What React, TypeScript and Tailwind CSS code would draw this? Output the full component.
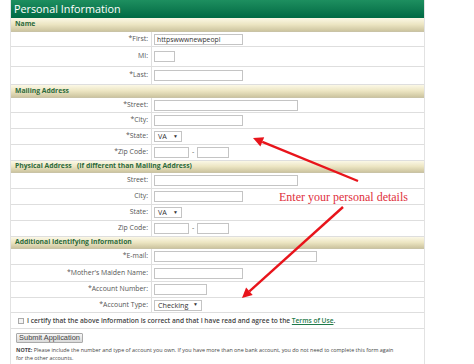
import React from 'react';

interface RowProps {
  label: string;
  h?: string;
  children?: React.ReactNode;
}

// one label / field line of the form table
const Row: React.FC<RowProps> = ({ label, h = 'h-[16px]', children }) => (
  <div className={`flex ${h} border-b border-[#dedede]`}>
    <div className="w-[141px] shrink-0 border-r border-[#dedede] flex items-center justify-end pr-[3px] text-[6.9px] text-[#555]">
      {label}
    </div>
    <div className="flex items-center pl-[2px] gap-[3px]">{children}</div>
  </div>
);

const Section: React.FC<{ title: string; h?: string }> = ({ title, h = 'h-[13px]' }) => (
  <div
    className={`${h} flex items-center pl-[4px] text-[6.8px] font-bold text-[#2c6a3a] whitespace-pre bg-linear-to-b from-[#fbf8e6] via-[#ece5c2] to-[#cdc5a0] border-b border-[#c9c3a6]`}
  >
    {title}
  </div>
);

const Field: React.FC<{ w: string; value?: string }> = ({ w, value = '' }) => (
  <input
    readOnly
    value={value}
    className={`${w} h-[11px] border border-[#c4c4c4] bg-white px-[2px] text-[6.8px] text-[#333] outline-none`}
  />
);

const Select: React.FC<{ w: string; value: string }> = ({ w, value }) => (
  <div className={`${w} h-[11px] border border-[#c4c4c4] bg-white flex items-center justify-between px-[3px] text-[7.2px] text-[#333]`}>
    <span>{value}</span>
    <span className="text-[5px]">▼</span>
  </div>
);

const Zip = () => (
  <>
    <Field w="w-[35px]" />
    <span className="text-[7px] text-[#555]">-</span>
    <Field w="w-[32px]" />
  </>
);

export default function App() {
  return (
    <div className="relative w-[474px] h-[364px] overflow-hidden bg-white" style={{ fontFamily: '"Open Sans", sans-serif' }}>
      <div className="ml-[10px] w-[415px] h-full border-x border-[#e2e2e2]">
        <div className="h-[18px] flex items-center pl-[3px] text-[10.8px] text-white bg-linear-to-b from-[#1d8f5f] to-[#006a44]">
          Personal Information
        </div>

        <Section title="Name" h="h-[14px]" />
        <Row label="*First:" h="h-[15px]">
          <Field w="w-[89px]" value="httpswwwnewpeopl" />
        </Row>
        <Row label="MI:" h="h-[20px]">
          <Field w="w-[21px]" />
        </Row>
        <Row label="*Last:" h="h-[18px]">
          <Field w="w-[89px]" />
        </Row>

        <Section title="Mailing Address" />
        <Row label="*Street:" h="h-[15px]">
          <Field w="w-[144px]" />
        </Row>
        <Row label="*City:">
          <Field w="w-[89px]" />
        </Row>
        <Row label="*State:">
          <Select w="w-[28px]" value="VA" />
        </Row>
        <Row label="*Zip Code:">
          <Zip />
        </Row>

        <Section title="Physical Address   (If different than Mailing Address)" h="h-[12px]" />
        <Row label="Street:">
          <Field w="w-[144px]" />
        </Row>
        <Row label="City:">
          <Field w="w-[89px]" />
        </Row>
        <Row label="State:">
          <Select w="w-[28px]" value="VA" />
        </Row>
        <Row label="Zip Code:">
          <Zip />
        </Row>

        <Section title="Additional Identifying Information" h="h-[12px]" />
        <Row label="*E-mail:">
          <Field w="w-[163px]" />
        </Row>
        <Row label="*Mother's Maiden Name:" h="h-[17px]">
          <Field w="w-[89px]" />
        </Row>
        <Row label="*Account Number:">
          <Field w="w-[53px]" />
        </Row>
        <Row label="*Account Type:" h="h-[15px]">
          <Select w="w-[48px]" value="Checking" />
        </Row>

        <div className="h-[16px] flex items-center gap-[3px] pl-[7px] border-b border-[#dedede] text-[6.6px] font-semibold text-[#444] whitespace-nowrap">
          <span className="w-[6px] h-[6px] shrink-0 border border-[#aaa] bg-[#f4f4f4]" />
          <span>
            I certify that the above information is correct and that I have read and agree to the{' '}
            <span className="text-[#1f7a4a] underline">Terms of Use</span>.
          </span>
        </div>

        <div className="pl-[5px] pt-[4px]">
          <div
            className="w-[67px] h-[10px] flex items-center justify-center border border-[#aaa] rounded-[1px] bg-linear-to-b from-[#f6f6f6] to-[#dadada] text-[7.4px] text-[#444] whitespace-nowrap"
            style={{ fontFamily: '"Liberation Sans", sans-serif' }}
          >
            Submit Application
          </div>
          <p className="mt-[3px] text-[5.4px] leading-[8px] text-[#444] whitespace-nowrap">
            <span className="font-bold">NOTE:</span> Please include the number and type of account you own. If you have more than one bank account, you do not need to complete this form again
            <br />
            for the other accounts.
          </p>
        </div>
      </div>

      <div
        className="absolute left-[279px] top-[188px] text-[12px] text-[#e0303c] whitespace-nowrap"
        style={{ fontFamily: '"Liberation Serif", serif' }}
      >
        Enter your personal details
      </div>

      <svg className="absolute inset-0 pointer-events-none" width="474" height="364" viewBox="0 0 474 364">
        <line x1="358" y1="181" x2="262.3" y2="141.8" stroke="#e8141b" strokeWidth="2.4" />
        <polygon points="253,138 264.2,137.2 260.4,146.4" fill="#e8141b" />
        <line x1="343" y1="207" x2="249.4" y2="291.3" stroke="#e8141b" strokeWidth="2.4" />
        <polygon points="242,298 252.7,295 246.1,287.6" fill="#e8141b" />
      </svg>
    </div>
  );
}
